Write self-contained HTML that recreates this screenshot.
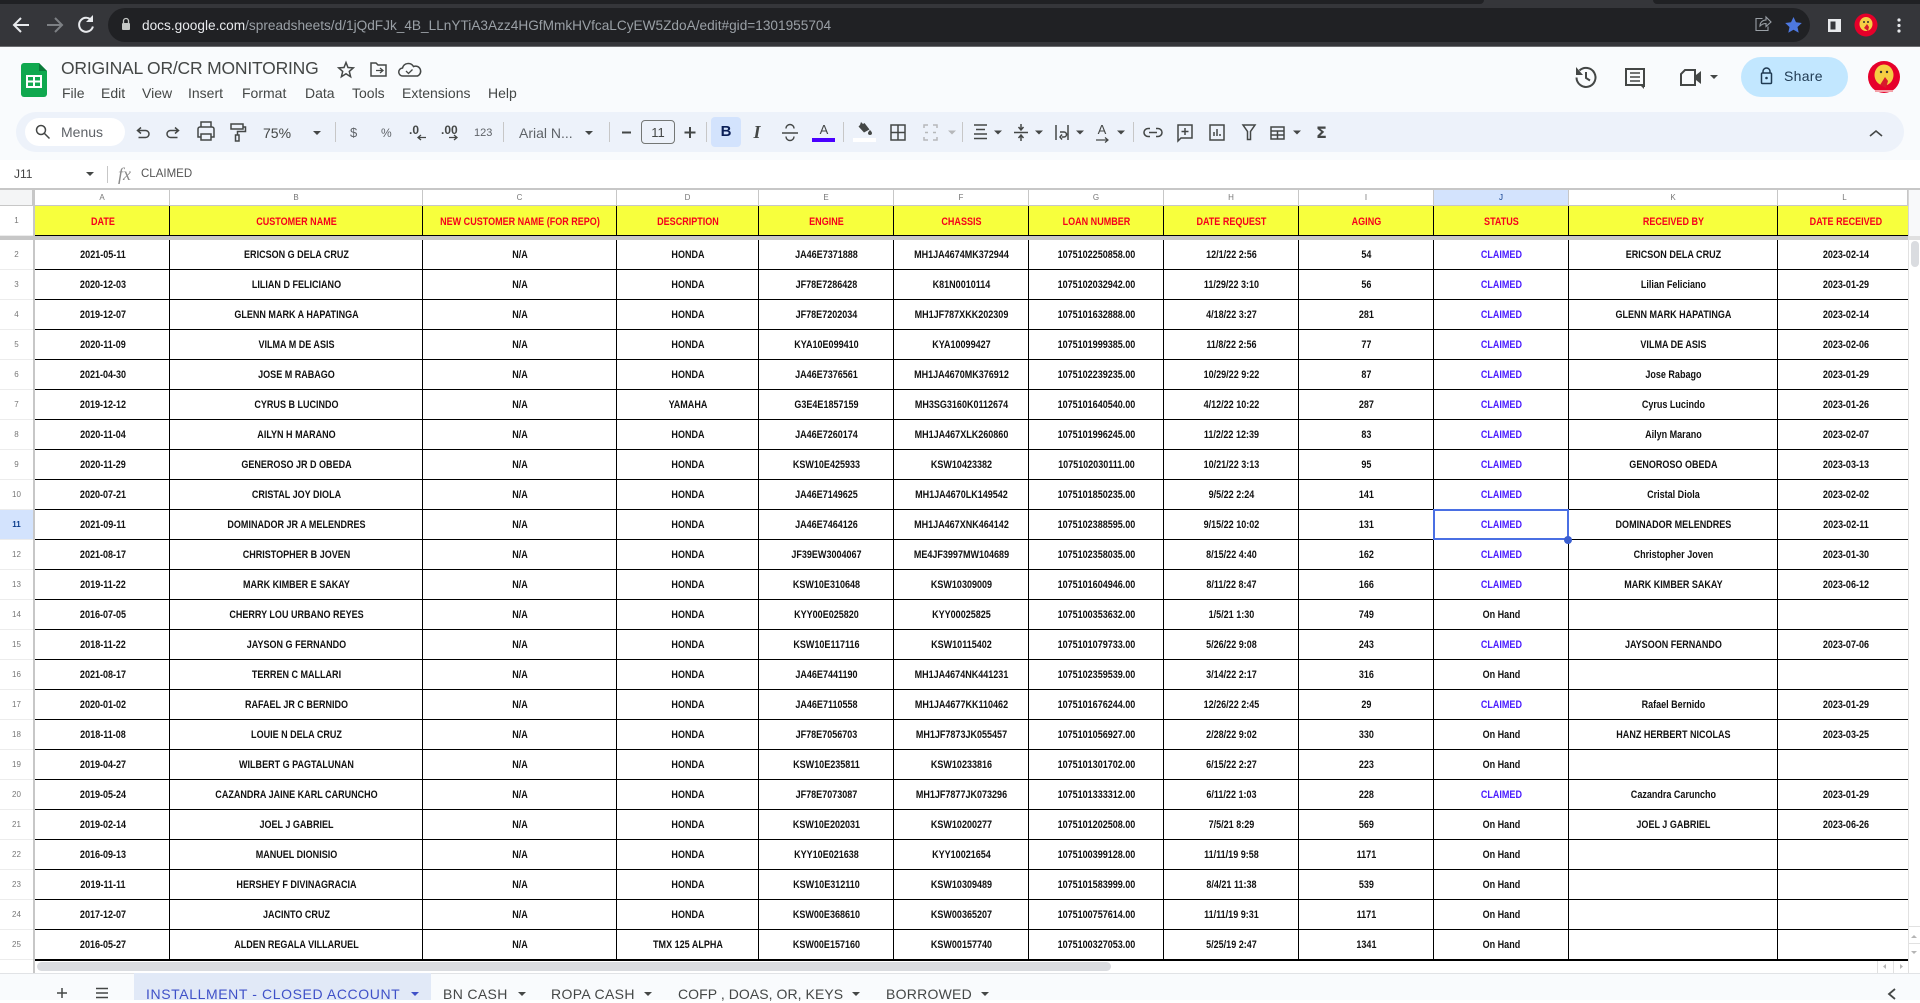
<!DOCTYPE html>
<html><head><meta charset="utf-8"><title>ORIGINAL OR/CR MONITORING</title>
<style>
*{box-sizing:border-box}
html,body{margin:0;padding:0;width:1920px;height:1000px;overflow:hidden;background:#fff;font-family:"Liberation Sans",sans-serif}
.a{position:absolute;white-space:nowrap}
#chrome{position:absolute;left:0;top:0;width:1920px;height:47px;background:#35363a;border-bottom:1px solid #6b6c6f}
#head{position:absolute;left:0;top:47px;width:1920px;height:113px;background:#f9fbfd}
#pill{position:absolute;left:16px;top:112px;width:1888px;height:40px;border-radius:20px;background:#edf2fa}
.m{position:absolute;top:85px;font-size:14px;line-height:17px;color:#444746}
.t{position:absolute;font-size:12px;line-height:14px;color:#444746;white-space:nowrap}
.sep{position:absolute;top:122px;width:1px;height:20px;background:#c7c7c7}
.v{position:absolute;top:206px;width:1px;height:754px;background:#000}
#hdr{position:absolute;left:0;top:190px;width:1908px;table-layout:fixed;border-collapse:separate;border-spacing:0;font-size:8px;color:#777}
#hdr td{padding:0;height:16px;text-align:center;vertical-align:middle;border-right:1px solid #c7c7c7;border-bottom:1px solid #c7c7c7;background:#fff}
#hdr td.n{background:#f4f5f6;border-right:3px solid #c7c7c7}
#hdr td.j{background:#d3e3fd;color:#0b3c8c}
#nums{position:absolute;left:0;top:206px;width:33px;font-size:8px;color:#777;text-align:center}
#nums div{height:30px;line-height:30px;border-bottom:1px solid #ececec}
#nums div.g{height:4px;background:#c7c7c7;border:0}
#nums div.s{background:#d3e3fd;color:#0b3c8c;font-weight:bold}
#data{position:absolute;left:35.5px;top:206px;width:2290.2px;transform:scaleX(.82);transform-origin:0 0;table-layout:fixed;border-collapse:separate;border-spacing:0;font-size:11px;font-weight:bold;color:#111}
#data td{padding:0;height:30px;text-align:center;vertical-align:middle;white-space:nowrap;overflow:hidden;border:0;background:transparent}
#data tr.h td{color:#f5001c;padding-top:2px}
#data tr.g td{height:4px;font-size:0;line-height:0}
#data td.c{color:#4a1cff}
.tab{position:absolute;top:986px;font-size:14px;line-height:17px;color:#444746;white-space:nowrap;letter-spacing:.35px}
</style></head><body>

<div id="chrome"></div>
<div class="a" style="left:0;top:0;width:1484px;height:4px;background:#202124;border-bottom-right-radius:4px"></div>
<div class="a" style="left:1653px;top:0;width:267px;height:4px;background:#202124;border-bottom-left-radius:4px"></div>
<div class="a" style="left:108px;top:8px;width:1702px;height:34px;border-radius:17px;background:#202124"></div>
<div class="a" style="left:142px;top:17px;font-size:13.65px;line-height:17px;color:#9aa0a6"><span style="color:#e8eaed">docs.google.com</span>/spreadsheets/d/1jQdFJk_4B_LLnYTiA3Azz4HGfMmkHVfcaLCyEW5ZdoA/edit#gid=1301955704</div>

<div id="head"></div>
<div class="a" style="left:61px;top:57px;font-size:17.5px;line-height:22px;color:#444746;letter-spacing:-.2px">ORIGINAL OR/CR MONITORING</div>
<span class="m" style="left:62px">File</span><span class="m" style="left:101px">Edit</span><span class="m" style="left:142px">View</span><span class="m" style="left:188px">Insert</span><span class="m" style="left:242px">Format</span><span class="m" style="left:305px">Data</span><span class="m" style="left:352px">Tools</span><span class="m" style="left:402px">Extensions</span><span class="m" style="left:488px">Help</span>

<div id="pill"></div>
<div class="a" style="left:25px;top:118px;width:100px;height:28px;border-radius:14px;background:#fff"></div>
<span class="t" style="left:61px;top:124px;font-size:14px;line-height:17px;color:#5f6368">Menus</span>
<span class="t" style="left:263px;top:125px;font-size:14px;line-height:17px">75%</span>
<span class="t" style="left:350px;top:125px;font-size:13px;line-height:16px;color:#5f6368">$</span>
<span class="t" style="left:381px;top:126px;color:#5f6368">%</span>
<span class="t" style="left:474px;top:126px;font-size:11px;color:#5f6368">123</span>
<span class="t" style="left:519px;top:125px;font-size:14px;line-height:17px;color:#5f6368">Arial N...</span>
<div class="a" style="left:641px;top:120px;width:34px;height:24px;border:1px solid #747775;border-radius:4px"></div>
<span class="t" style="left:641px;top:125px;width:34px;text-align:center;font-size:13px;line-height:15px">11</span>
<div class="a" style="left:711px;top:117px;width:30px;height:30px;border-radius:4px;background:#d3e3fd"></div>
<span class="t" style="left:711px;top:123px;width:30px;text-align:center;font-size:15px;line-height:18px;font-weight:bold;color:#0b1f57">B</span>
<span class="t" style="left:742px;top:123px;width:30px;text-align:center;font-family:'Liberation Serif',serif;font-size:18px;line-height:18px;font-weight:bold;font-style:italic">I</span>
<span class="t" style="left:813px;top:122px;width:22px;text-align:center;font-size:13px;line-height:15px">A</span>
<div class="a" style="left:812px;top:138px;width:23px;height:4px;background:#4a00ff"></div>
<div class="a" style="left:853px;top:138px;width:23px;height:4px;background:#fff"></div>
<span class="t" style="left:1092px;top:122px;width:20px;text-align:center;font-size:13px;line-height:15px">A</span>
<span class="t" style="left:1316px;top:124px;font-size:16px;line-height:18px;font-weight:bold;font-family:'DejaVu Sans',sans-serif">Σ</span>
<span class="t" style="left:409px;top:124px;font-size:12px;font-weight:bold;line-height:13px">.0</span>
<span class="t" style="left:441px;top:124px;font-size:12px;font-weight:bold;line-height:13px">.00</span>
<i class="sep" style="left:335px"></i><i class="sep" style="left:503px"></i><i class="sep" style="left:609px"></i><i class="sep" style="left:706px"></i><i class="sep" style="left:843px"></i><i class="sep" style="left:962px"></i><i class="sep" style="left:1133px"></i>
<div class="a" style="left:1741px;top:57px;width:107px;height:40px;border-radius:20px;background:#c2e7ff"></div>
<span class="t" style="left:1784px;top:68px;font-size:14px;line-height:17px;color:#1f3a52;letter-spacing:.3px">Share</span>

<span class="t" style="left:14px;top:167px;color:#444">J11</span>
<div class="a" style="left:107px;top:166px;width:1px;height:17px;background:#c7c7c7"></div>
<span class="t" style="left:118px;top:166px;font-family:'Liberation Serif',serif;font-style:italic;font-size:18px;line-height:17px;color:#8a8a8a">fx</span>
<span class="t" style="left:141px;top:167px;font-size:11.5px;color:#555">CLAIMED</span>

<div class="a" style="left:0;top:188px;width:1920px;height:2px;background:#c7c7c7"></div>
<table id="hdr">
<colgroup><col style="width:35px"><col style="width:135px"><col style="width:253px"><col style="width:194px"><col style="width:142px"><col style="width:135px"><col style="width:135px"><col style="width:135px"><col style="width:135px"><col style="width:135px"><col style="width:135px"><col style="width:209px"><col style="width:130px"></colgroup>
<tr><td class="n"></td><td>A</td><td>B</td><td>C</td><td>D</td><td>E</td><td>F</td><td>G</td><td>H</td><td>I</td><td class="j">J</td><td>K</td><td style="padding-left:4px">L</td></tr>
</table>

<div class="a" style="left:35px;top:206px;width:1873px;height:29px;background:#f7ff3d"></div>
<div class="a" style="left:35px;top:235px;width:1873px;height:1px;background:#000"></div>
<div class="a" style="left:35px;top:240px;width:1873px;height:720px;background:repeating-linear-gradient(to bottom,transparent 0,transparent 29px,#000 29px,#000 30px)"></div>
<i class="v" style="left:169px"></i><i class="v" style="left:422px"></i><i class="v" style="left:616px"></i><i class="v" style="left:758px"></i><i class="v" style="left:893px"></i><i class="v" style="left:1028px"></i><i class="v" style="left:1163px"></i><i class="v" style="left:1298px"></i><i class="v" style="left:1433px"></i><i class="v" style="left:1568px"></i><i class="v" style="left:1777px"></i>
<div class="a" style="left:33px;top:206px;width:2px;height:767px;background:#c7c7c7"></div>
<div class="a" style="left:0;top:236px;width:1908px;height:4px;background:#c7c7c7"></div>

<div id="nums"><div>1</div><div class="g"></div><div>2</div><div>3</div><div>4</div><div>5</div><div>6</div><div>7</div><div>8</div><div>9</div><div>10</div><div class="s">11</div><div>12</div><div>13</div><div>14</div><div>15</div><div>16</div><div>17</div><div>18</div><div>19</div><div>20</div><div>21</div><div>22</div><div>23</div><div>24</div><div>25</div></div>

<table id="data">
<colgroup><col style="width:163.41px"><col style="width:308.54px"><col style="width:236.59px"><col style="width:173.17px"><col style="width:164.63px"><col style="width:164.63px"><col style="width:164.63px"><col style="width:164.63px"><col style="width:164.63px"><col style="width:164.63px"><col style="width:254.88px"><col style="width:165.85px"></colgroup>
<tr class="h"><td>DATE</td><td>CUSTOMER NAME</td><td>NEW CUSTOMER NAME (FOR REPO)</td><td>DESCRIPTION</td><td>ENGINE</td><td>CHASSIS</td><td>LOAN NUMBER</td><td>DATE REQUEST</td><td>AGING</td><td>STATUS</td><td>RECEIVED BY</td><td>DATE RECEIVED</td></tr>
<tr class="g"><td colspan="12"></td></tr>
<tr><td>2021-05-11</td><td>ERICSON G DELA CRUZ</td><td>N/A</td><td>HONDA</td><td>JA46E7371888</td><td>MH1JA4674MK372944</td><td>1075102250858.00</td><td>12/1/22 2:56</td><td>54</td><td class="c">CLAIMED</td><td>ERICSON DELA CRUZ</td><td>2023-02-14</td></tr>
<tr><td>2020-12-03</td><td>LILIAN D FELICIANO</td><td>N/A</td><td>HONDA</td><td>JF78E7286428</td><td>K81N0010114</td><td>1075102032942.00</td><td>11/29/22 3:10</td><td>56</td><td class="c">CLAIMED</td><td>Lilian Feliciano</td><td>2023-01-29</td></tr>
<tr><td>2019-12-07</td><td>GLENN MARK A HAPATINGA</td><td>N/A</td><td>HONDA</td><td>JF78E7202034</td><td>MH1JF787XKK202309</td><td>1075101632888.00</td><td>4/18/22 3:27</td><td>281</td><td class="c">CLAIMED</td><td>GLENN MARK HAPATINGA</td><td>2023-02-14</td></tr>
<tr><td>2020-11-09</td><td>VILMA M DE ASIS</td><td>N/A</td><td>HONDA</td><td>KYA10E099410</td><td>KYA10099427</td><td>1075101999385.00</td><td>11/8/22 2:56</td><td>77</td><td class="c">CLAIMED</td><td>VILMA DE ASIS</td><td>2023-02-06</td></tr>
<tr><td>2021-04-30</td><td>JOSE M RABAGO</td><td>N/A</td><td>HONDA</td><td>JA46E7376561</td><td>MH1JA4670MK376912</td><td>1075102239235.00</td><td>10/29/22 9:22</td><td>87</td><td class="c">CLAIMED</td><td>Jose Rabago</td><td>2023-01-29</td></tr>
<tr><td>2019-12-12</td><td>CYRUS B LUCINDO</td><td>N/A</td><td>YAMAHA</td><td>G3E4E1857159</td><td>MH3SG3160K0112674</td><td>1075101640540.00</td><td>4/12/22 10:22</td><td>287</td><td class="c">CLAIMED</td><td>Cyrus Lucindo</td><td>2023-01-26</td></tr>
<tr><td>2020-11-04</td><td>AILYN H MARANO</td><td>N/A</td><td>HONDA</td><td>JA46E7260174</td><td>MH1JA467XLK260860</td><td>1075101996245.00</td><td>11/2/22 12:39</td><td>83</td><td class="c">CLAIMED</td><td>Ailyn Marano</td><td>2023-02-07</td></tr>
<tr><td>2020-11-29</td><td>GENEROSO JR D OBEDA</td><td>N/A</td><td>HONDA</td><td>KSW10E425933</td><td>KSW10423382</td><td>1075102030111.00</td><td>10/21/22 3:13</td><td>95</td><td class="c">CLAIMED</td><td>GENOROSO OBEDA</td><td>2023-03-13</td></tr>
<tr><td>2020-07-21</td><td>CRISTAL JOY DIOLA</td><td>N/A</td><td>HONDA</td><td>JA46E7149625</td><td>MH1JA4670LK149542</td><td>1075101850235.00</td><td>9/5/22 2:24</td><td>141</td><td class="c">CLAIMED</td><td>Cristal Diola</td><td>2023-02-02</td></tr>
<tr><td>2021-09-11</td><td>DOMINADOR JR A MELENDRES</td><td>N/A</td><td>HONDA</td><td>JA46E7464126</td><td>MH1JA467XNK464142</td><td>1075102388595.00</td><td>9/15/22 10:02</td><td>131</td><td class="c">CLAIMED</td><td>DOMINADOR MELENDRES</td><td>2023-02-11</td></tr>
<tr><td>2021-08-17</td><td>CHRISTOPHER B JOVEN</td><td>N/A</td><td>HONDA</td><td>JF39EW3004067</td><td>ME4JF3997MW104689</td><td>1075102358035.00</td><td>8/15/22 4:40</td><td>162</td><td class="c">CLAIMED</td><td>Christopher Joven</td><td>2023-01-30</td></tr>
<tr><td>2019-11-22</td><td>MARK KIMBER E SAKAY</td><td>N/A</td><td>HONDA</td><td>KSW10E310648</td><td>KSW10309009</td><td>1075101604946.00</td><td>8/11/22 8:47</td><td>166</td><td class="c">CLAIMED</td><td>MARK KIMBER SAKAY</td><td>2023-06-12</td></tr>
<tr><td>2016-07-05</td><td>CHERRY LOU URBANO REYES</td><td>N/A</td><td>HONDA</td><td>KYY00E025820</td><td>KYY00025825</td><td>1075100353632.00</td><td>1/5/21 1:30</td><td>749</td><td>On Hand</td><td></td><td></td></tr>
<tr><td>2018-11-22</td><td>JAYSON G FERNANDO</td><td>N/A</td><td>HONDA</td><td>KSW10E117116</td><td>KSW10115402</td><td>1075101079733.00</td><td>5/26/22 9:08</td><td>243</td><td class="c">CLAIMED</td><td>JAYSOON FERNANDO</td><td>2023-07-06</td></tr>
<tr><td>2021-08-17</td><td>TERREN C MALLARI</td><td>N/A</td><td>HONDA</td><td>JA46E7441190</td><td>MH1JA4674NK441231</td><td>1075102359539.00</td><td>3/14/22 2:17</td><td>316</td><td>On Hand</td><td></td><td></td></tr>
<tr><td>2020-01-02</td><td>RAFAEL JR C BERNIDO</td><td>N/A</td><td>HONDA</td><td>JA46E7110558</td><td>MH1JA4677KK110462</td><td>1075101676244.00</td><td>12/26/22 2:45</td><td>29</td><td class="c">CLAIMED</td><td>Rafael Bernido</td><td>2023-01-29</td></tr>
<tr><td>2018-11-08</td><td>LOUIE N DELA CRUZ</td><td>N/A</td><td>HONDA</td><td>JF78E7056703</td><td>MH1JF7873JK055457</td><td>1075101056927.00</td><td>2/28/22 9:02</td><td>330</td><td>On Hand</td><td>HANZ HERBERT NICOLAS</td><td>2023-03-25</td></tr>
<tr><td>2019-04-27</td><td>WILBERT G PAGTALUNAN</td><td>N/A</td><td>HONDA</td><td>KSW10E235811</td><td>KSW10233816</td><td>1075101301702.00</td><td>6/15/22 2:27</td><td>223</td><td>On Hand</td><td></td><td></td></tr>
<tr><td>2019-05-24</td><td>CAZANDRA JAINE KARL CARUNCHO</td><td>N/A</td><td>HONDA</td><td>JF78E7073087</td><td>MH1JF7877JK073296</td><td>1075101333312.00</td><td>6/11/22 1:03</td><td>228</td><td class="c">CLAIMED</td><td>Cazandra Caruncho</td><td>2023-01-29</td></tr>
<tr><td>2019-02-14</td><td>JOEL J GABRIEL</td><td>N/A</td><td>HONDA</td><td>KSW10E202031</td><td>KSW10200277</td><td>1075101202508.00</td><td>7/5/21 8:29</td><td>569</td><td>On Hand</td><td>JOEL J GABRIEL</td><td>2023-06-26</td></tr>
<tr><td>2016-09-13</td><td>MANUEL DIONISIO</td><td>N/A</td><td>HONDA</td><td>KYY10E021638</td><td>KYY10021654</td><td>1075100399128.00</td><td>11/11/19 9:58</td><td>1171</td><td>On Hand</td><td></td><td></td></tr>
<tr><td>2019-11-11</td><td>HERSHEY F DIVINAGRACIA</td><td>N/A</td><td>HONDA</td><td>KSW10E312110</td><td>KSW10309489</td><td>1075101583999.00</td><td>8/4/21 11:38</td><td>539</td><td>On Hand</td><td></td><td></td></tr>
<tr><td>2017-12-07</td><td>JACINTO CRUZ</td><td>N/A</td><td>HONDA</td><td>KSW00E368610</td><td>KSW00365207</td><td>1075100757614.00</td><td>11/11/19 9:31</td><td>1171</td><td>On Hand</td><td></td><td></td></tr>
<tr><td>2016-05-27</td><td>ALDEN REGALA VILLARUEL</td><td>N/A</td><td>TMX 125 ALPHA</td><td>KSW00E157160</td><td>KSW00157740</td><td>1075100327053.00</td><td>5/25/19 2:47</td><td>1341</td><td>On Hand</td><td></td><td></td></tr>
</table>

<div class="a" style="left:1908px;top:190px;width:12px;height:50px;background:#f8f9fa;border-left:1px solid #d5d5d5"></div>
<div class="a" style="left:1908px;top:236px;width:12px;height:4px;background:#e0e0e0"></div>
<div class="a" style="left:1908px;top:240px;width:12px;height:733px;background:#fff;border-left:1px solid #e1e1e1"></div>
<div class="a" style="left:1911px;top:241px;width:8px;height:26px;border-radius:4px;background:#dadce0"></div>
<div class="a" style="left:1908px;top:926px;width:12px;height:1px;background:#e1e1e1"></div>
<div class="a" style="left:1908px;top:943px;width:12px;height:1px;background:#e1e1e1"></div>

<div class="a" style="left:35px;top:959px;width:1873px;height:2px;background:#000"></div>
<div class="a" style="left:37px;top:962px;width:1074px;height:9px;border-radius:5px;background:#dadce0"></div>
<div class="a" style="left:1877px;top:961px;width:1px;height:12px;background:#e1e1e1"></div>
<div class="a" style="left:1893px;top:961px;width:1px;height:12px;background:#e1e1e1"></div>
<div class="a" style="left:1908px;top:961px;width:1px;height:12px;background:#e1e1e1"></div>

<div class="a" style="left:1433px;top:509px;width:136px;height:31px;border:2px solid #4a6fe3"></div>
<div class="a" style="left:1564px;top:536px;width:8px;height:8px;border-radius:50%;background:#3b5fd0"></div>

<div class="a" style="left:0;top:973px;width:1920px;height:27px;background:#f9fbfd;border-top:1px solid #e1e3e6"></div>
<div class="a" style="left:134px;top:973px;width:297px;height:27px;background:#e1e9f7"></div>
<span class="tab" style="left:146px;color:#3f51c8;letter-spacing:.6px">INSTALLMENT - CLOSED ACCOUNT</span>
<span class="tab" style="left:443px">BN CASH</span><span class="tab" style="left:551px">ROPA CASH</span><span class="tab" style="left:678px;letter-spacing:.06px">COFP , DOAS, OR, KEYS</span><span class="tab" style="left:886px;letter-spacing:.25px">BORROWED</span>

<svg class="a" style="left:0;top:0" width="1920" height="1000" viewBox="0 0 1920 1000" fill="none">
<!-- browser -->
<g stroke="#e8eaed" stroke-width="2"><path d="M29 25H15M21 18l-7 7 7 7"/></g>
<g stroke="#7d8084" stroke-width="2"><path d="M47 25h14M55 18l7 7-7 7"/></g>
<path d="M92 21a7 7 0 1 0 .9 5.5" stroke="#e8eaed" stroke-width="2"/><path d="M93 15v7h-7z" fill="#e8eaed"/>
<path d="M123.500 23v-2a2.500 2.500 0 0 1 5 0v2" stroke="#c4c7c5" stroke-width="1.300"/><rect x="122" y="23" width="8" height="7" rx="1" fill="#c4c7c5"/>
<path d="M1762 19v-.500h-6v12h12v-4" stroke="#9aa0a6" stroke-width="1.100"/><path d="M1760 26c0-4 3-6 6-6v-3l5 5-5 4.500v-3c-3 0-4.500 1-6 2.500z" stroke="#9aa0a6" stroke-width="1.100"/>
<path d="M1793.500 17l2.500 5.300 5.800.7-4.300 4 1.200 5.800-5.200-3-5.200 3 1.200-5.800-4.300-4 5.800-.7z" fill="#4d78e0"/>
<rect x="1828" y="19" width="13" height="13" fill="#e8eaed"/><rect x="1830.500" y="21.500" width="5" height="8" fill="#35363a"/>
<circle cx="1866" cy="25" r="11.500" fill="#e5002a"/><ellipse cx="1866" cy="24" rx="6.500" ry="7" fill="#f6cf45"/><path d="M1864 28l3-4 2 3-1 4z" fill="#d71a2c"/><circle cx="1864" cy="22" r="1" fill="#333"/><circle cx="1868" cy="22" r="1" fill="#333"/>
<g fill="#e8eaed"><circle cx="1899" cy="20" r="1.600"/><circle cx="1899" cy="25.500" r="1.600"/><circle cx="1899" cy="31" r="1.600"/></g>
<!-- logo -->
<path d="M24 63h15l8 8v23a3 3 0 0 1-3 3H24a3 3 0 0 1-3-3V66a3 3 0 0 1 3-3z" fill="#10a84f"/><path d="M39 63l8 8h-8z" fill="#0a7a3a"/>
<path d="M27 76h14v11H27z" stroke="#fff" stroke-width="2"/><path d="M34 76v11M27 81.500h14" stroke="#fff" stroke-width="2"/>
<path d="M346 62.500l2 5 5.300.400-4 3.500 1.300 5.300-4.600-2.900-4.600 2.900 1.300-5.300-4-3.500 5.300-.400z" stroke="#444746" stroke-width="1.500"/>
<path d="M371 63h5l2 2h8v11h-15z" stroke="#444746" stroke-width="1.500"/><path d="M376 70.500h6M380 68l3 2.500-3 2.500" stroke="#444746" stroke-width="1.300"/>
<path d="M406 76h-3a4 4 0 0 1-.5-8 6 6 0 0 1 11-1.500 4.700 4.700 0 0 1 4 9.500z" stroke="#444746" stroke-width="1.500"/><path d="M406 71l2.500 2.500 4-4" stroke="#444746" stroke-width="1.300"/>
<!-- right icons -->
<g stroke="#444746" stroke-width="2"><path d="M1579.500 70.500a9.500 9.500 0 1 1-3 7"/><path d="M1586 72v6l4 2.500"/></g><path d="M1576 67v8h7z" fill="#444746"/>
<path d="M1626 69h18v17h-1v-1h-17z" stroke="#444746" stroke-width="2"/><path d="M1644 84v5l-4-4z" fill="#444746"/><path d="M1630 73h10M1630 77h10M1630 81h10" stroke="#444746" stroke-width="1.500"/>
<path d="M1681 85V74l4-4h10v15z" stroke="#444746" stroke-width="2"/><path d="M1696 75l5-4v13l-5-4z" fill="#444746"/>
<path d="M1710 75h8l-4 4z" fill="#444746"/>
<path d="M1763 73v-1.500a3.500 3.500 0 0 1 7 0V73" stroke="#1f3a52" stroke-width="1.500"/><rect x="1761.500" y="73" width="10" height="10.500" rx="1" stroke="#1f3a52" stroke-width="1.500"/><circle cx="1766.500" cy="78" r="1.300" fill="#1f3a52"/>
<circle cx="1884" cy="77" r="16" fill="#e6002b"/><ellipse cx="1884" cy="75" rx="9.500" ry="10.500" fill="#f5ce43"/><path d="M1880 85l5-8 3 4-2 7z" fill="#d71a2c"/><circle cx="1881" cy="72" r="1.200" fill="#333"/><circle cx="1887" cy="72" r="1.200" fill="#333"/><path d="M1875 91h18" stroke="#f4a0a8" stroke-width="2"/>
<!-- toolbar -->
<g stroke="#444746" stroke-width="1.500">
<circle cx="41" cy="130" r="4.500"/><path d="M44.500 133.500l5 5"/>
<path d="M142 129.500l-3.500 3 3.500 3M138.500 132.500h8a3.500 3.500 0 0 1 0 7h-7" transform="translate(-1,-2)"/>
<path d="M174 129.500l3.500 3-3.500 3M177.500 132.500h-8a3.500 3.500 0 0 0 0 7h7" transform="translate(1,-2)"/>
<path d="M201 127v-5h10v5M201 137h-3v-8a2 2 0 0 1 2-2h12a2 2 0 0 1 2 2v8h-3M201 134h10v6h-10z"/>
<path d="M231 124h12v5h-12zM243 127h2.500v4.500h-8v3.500M235.500 135h3.500v6h-3.500z"/>
<path d="M782 133h16M786 128.500a4 4 0 0 1 8 0M786 136.500a4 4 0 0 0 8 0" stroke-width="1.400"/>
<path d="M891 125h14v15h-14zM898 125v15M891 132.500h14"/>
<path d="M974 125h13M976 129.500h9M974 134h13M974 138.500h13"/>
<path d="M1021 124v5M1021 136v5M1014 132.500h14M1018.500 127l2.500 3 2.500-3M1018.500 138l2.500-3 2.500 3"/>
<path d="M1056 125v15M1068 125v15M1060 132h4a2.500 2.500 0 0 1 0 5h-2M1062 134.500l-2 2.500 2 2.500"/>
<path d="M1096 140h12M1105 137.500l3 2.500-3 2.500" stroke-width="1.200"/>
<path d="M1150 128.500h-2a4 4 0 0 0 0 8h2M1156 128.500h2a4 4 0 0 1 0 8h-2M1149 132.500h8"/>
<path d="M1178 125h14v13h-11l-3 3zM1185 128v7M1181.500 131.500h7"/>
<path d="M1210 125h14v15h-14zM1214 136v-4M1217 136v-7M1220 136v-2"/>
<path d="M1243 125h12l-4.500 6.500v8h-3v-8z"/>
<path d="M1271 127h13v12h-13z"/><path d="M1271 131h13M1277.500 131v8M1271 135h13"/>
<path d="M1870 136l6-5 6 5" stroke-width="1.600"/>
<path d="M622 132.500h9" stroke-width="2"/><path d="M690 127v11M684.500 132.500h11" stroke-width="2"/>
</g>
<g stroke="#444746" stroke-width="1.300"><path d="M418 137.500h8M421 135l-3 2.500 3 2.500"/><path d="M449 137.500h8M454 135l3 2.500-3 2.500"/></g>
<g fill="#444746"><path d="M313 131h8l-4 4z"/><path d="M585 131h8l-4 4z"/><path d="M994 130.500h8l-4 4z"/><path d="M1035 130.500h8l-4 4z"/><path d="M1076 130.500h8l-4 4z"/><path d="M1117 130.500h8l-4 4z"/><path d="M1293 130.500h8l-4 4z"/>
<path d="M860 125l-1.500 1.500 5.500 6 5.500-3-5-6.500-1.500 1-2-2z"/><path d="M870 130s-2 2-2 3a2 2 0 0 0 4 0c0-1-2-3-2-3z"/></g>
<path d="M948 130.500h8l-4 4z" fill="#b6b8ba"/>
<g stroke="#b6b8ba" stroke-width="1.500"><path d="M924 128v-3h4M937 128v-3h-4M924 137v3h4M937 137v3h-4M925 132.500h3M936 132.500h-3"/></g>
<!-- formula bar caret -->
<path d="M86 172h8l-4 4z" fill="#444746"/>
<!-- scroll arrows -->
<g fill="#b5b5b5"><path d="M1911 938l3-3 3 3z"/><path d="M1911 951l3 3 3-3z"/><path d="M1886 964v5l-3-2.500z"/><path d="M1900 964v5l3-2.500z"/></g>
<!-- tabs -->
<path d="M62 988v10M57 993h10" stroke="#444746" stroke-width="1.500"/>
<path d="M96 988.500h12M96 993h12M96 997.500h12" stroke="#444746" stroke-width="1.500"/>
<path d="M411 992h8l-4 4z" fill="#3f51c8"/><path d="M518 992h8l-4 4z" fill="#444746"/><path d="M644 992h8l-4 4z" fill="#444746"/><path d="M852 992h8l-4 4z" fill="#444746"/><path d="M981 992h8l-4 4z" fill="#444746"/>
<path d="M1895 989l-6 5 6 5" stroke="#444746" stroke-width="1.800"/>
</svg>
</body></html>
